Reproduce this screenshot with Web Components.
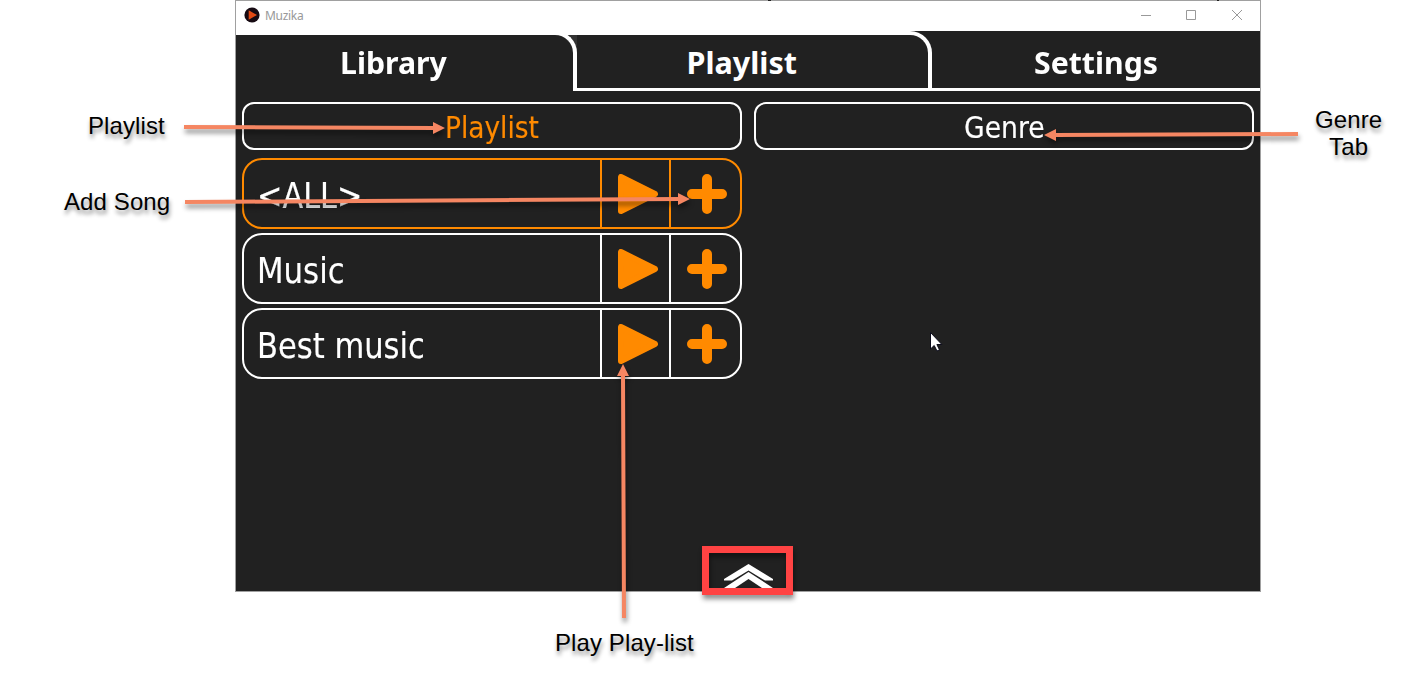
<!DOCTYPE html>
<html lang="en"><head><meta charset="utf-8"><title>Muzika</title>
<style>
html,body{margin:0;background:#fff;height:673px;overflow:hidden}
body{position:relative;width:1417px;font-family:"DejaVu Sans Condensed","DejaVu Sans",sans-serif}
</style></head><body>
<muzika-window>
  <title-bar slot="title">Muzika</title-bar>
  <tab-item slot="tab" kind="active" style="--w:341px"><fit-text w="107">Library</fit-text></tab-item>
  <tab-item slot="tab" kind="mid" style="--w:355px"><fit-text w="110">Playlist</fit-text></tab-item>
  <tab-item slot="tab" kind="last" style="--w:328px"><fit-text w="124">Settings</fit-text></tab-item>
  <sub-tab slot="sub" active><fit-text w="94">Playlist</fit-text></sub-tab>
  <sub-tab slot="sub"><fit-text w="81">Genre</fit-text></sub-tab>
  <list-row selected><fit-text w="105">&lt;ALL&gt;</fit-text></list-row>
  <list-row><fit-text w="88">Music</fit-text></list-row>
  <list-row><fit-text w="168">Best music</fit-text></list-row>
</muzika-window>
<callout-layer></callout-layer>
<callout-label style="left:88px;top:112px">Playlist</callout-label>
<callout-label style="left:64px;top:188px">Add Song</callout-label>
<callout-label style="left:555px;top:629px">Play Play-list</callout-label>
<callout-label style="left:1315px;top:106px">Genre<br>Tab</callout-label>
<script>
const define=(name,html,ready)=>{
  const t=document.createElement('template');t.innerHTML=html;
  customElements.define(name,class extends HTMLElement{
    constructor(){super();this.attachShadow({mode:'open'}).append(t.content.cloneNode(true));}
    connectedCallback(){if(ready)ready(this);}
  });
};
define('muzika-window',`<style>
:host{display:flex;flex-direction:column;box-sizing:border-box;width:1026px;height:592px;margin-left:235px;border:1px solid #a0a0a0;background:#212121;color:#fff}
.tabs{display:flex;height:60px;flex:none}
.subs{display:grid;grid-template-columns:500px 500px;gap:12px;padding:11px 6px 8px;height:48px}
.rows{display:flex;flex-direction:column;gap:4px;width:500px;padding-left:6px}
</style><slot name="title"></slot><div class="tabs"><slot name="tab"></slot></div><div class="subs"><slot name="sub"></slot></div><div class="rows"><slot></slot></div>`);
define('title-bar',`<style>
:host{display:flex;align-items:center;height:30px;background:#fff;color:#999;font:12px "Noto Sans",sans-serif;flex:none}
.logo{margin:-2px 5px 0 8px}span{flex:1;margin-top:-1px;letter-spacing:-.3px}.ctl{margin:-2px 18px 0 0}
</style><svg class="logo" width="16" height="16"><circle cx="8" cy="8" r="7.6" fill="#160a12"/><path d="M4.7 3.2L13 8l-8.300 4.800z" fill="#e24a14"/></svg><span><slot></slot></span>
<svg class="ctl" width="101" height="12" fill="none" stroke="#999"><path d="M0 6.500h10M45.500 1.500h9v9h-9zM91 1l10 10M101 1L91 11"/></svg>`);
define('tab-item',`<style>
:host{display:block;width:var(--w);height:60px;background:#212121;font:bold 30.500px "Noto Sans",sans-serif}
:host([kind=active]){background:linear-gradient(#fff 4px,#333 4px 57px,#212121 57px)}
div{box-sizing:border-box;height:60px;display:flex;align-items:center;justify-content:center;background:#212121}
:host(:not([kind=last])) div{border-top:4px solid #fff;border-right:4px solid #fff;border-top-right-radius:22px;padding-right:22px;padding-top:2px}
:host(:not([kind=active])) div{border-bottom:3px solid #fff}
:host([kind=active]) div{padding-bottom:3px}
:host([kind=last]) div{padding-top:6px}
</style><div><slot></slot></div>`);
define('sub-tab',`<style>
:host{box-sizing:border-box;display:flex;align-items:center;justify-content:center;height:48px;border:2px solid #fff;border-radius:12px;font-size:30px;padding-top:3px;-webkit-text-stroke:.15px}
:host([active]){color:#ff8a00}
</style><slot></slot>`);
define('list-row',`<style>
:host{--line:#fff;display:grid;grid-template-columns:356px 69px 1fr;box-sizing:border-box;height:71px;border:2px solid var(--line);border-radius:20px;font-size:35px;-webkit-text-stroke:.15px}
:host([selected]){--line:#ff8a00}
.name{display:flex;align-items:center;padding:5px 0 0 13px}
.cell{display:flex;border-left:2px solid var(--line);align-items:center;padding:1px 0 0 16px}
</style><div class="name"><slot></slot></div>
<div class="cell"><svg width="40" height="40"><path d="M3 3v34L37.500 20z" fill="#ff8a00" stroke="#ff8a00" stroke-width="6" stroke-linejoin="round" transform="scale(.988 1)"/></svg></div>
<div class="cell"><svg width="40" height="40"><path d="M20 5v30M5 20h30" stroke="#ff8a00" stroke-width="10" stroke-linecap="round"/></svg></div>`);
define('fit-text',`<style>:host{display:block;white-space:nowrap;line-height:1}span{display:inline-block;transform-origin:0 50%}</style><span><slot></slot></span>`,el=>{
  const s=el.shadowRoot.querySelector('span'),w=+el.getAttribute('w');
  requestAnimationFrame(()=>{s.style.transform='scaleX('+w/s.offsetWidth+')';el.style.width=w+'px';});
});
define('callout-label',`<style>
:host{position:absolute;font:24px/27px "Liberation Sans",Arial,sans-serif;letter-spacing:.1px;color:#000;text-align:center;white-space:nowrap;text-shadow:1px 4px 4px rgba(0,0,0,.45)}
</style><slot></slot>`);
define('callout-layer',`<style>
:host{position:absolute;left:0;top:0;width:1417px;height:673px}svg{display:block}
.s{filter:drop-shadow(1px 4px 2.500px rgba(0,0,0,.45))}
</style><svg width="1417" height="673">
<path d="M724 580.500V579L748.500 564 773 579v1.500h-8L748.500 570.500 732 580.500z" fill="#fff"/>
<path d="M724 588L748.500 572 773 588h-11L748.500 579 735 588z" fill="#fff"/>
<path d="M930.500 332.500v16.500l3.700-3.500 2.800 5.500 2.500-1.200-2.600-5.300h5z" fill="#fff" stroke="#0b0b1a"/>
<path d="M768 0h3v1h-3zM1217 0h2v1h-2z" fill="#222"/>
<g class="s"><rect x="705.500" y="549.500" width="84" height="42" fill="none" stroke="#ff4343" stroke-width="7"/></g>
<g class="s" stroke="#f58662" stroke-width="4"><path d="M184 127L435 128M185 202L680 199M624 618L623 374M1298 134L1055 135"/>
<g fill="#f58662" stroke="none"><path d="M433 122L445 128 433 134zM678 193L690 199 678 205zM617 376L623 364 629 376zM1056 129L1044 135 1056 141z"/></g></g>
</svg>`);
</script></body></html>
